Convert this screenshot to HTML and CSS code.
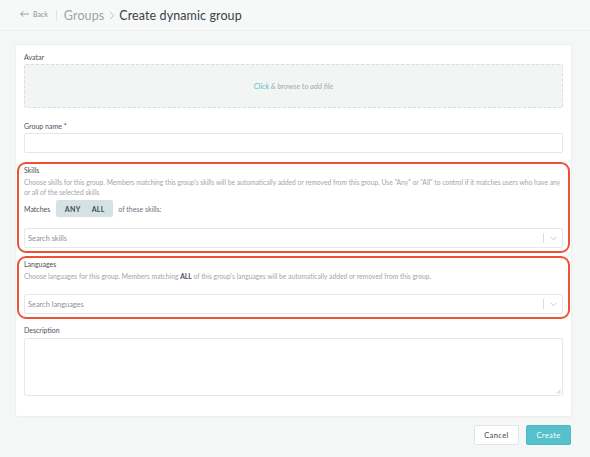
FILE: index.html
```html
<!DOCTYPE html>
<html>
<head>
<meta charset="utf-8">
<link rel="stylesheet" href="styles.css">
</head>
<body>
<header class="topbar">
  <a class="back">
    <svg class="back-arrow" width="9" height="6" viewBox="0 0 9 6"><path d="M8.5 3H1M3 0.7L0.8 3L3 5.3" fill="none" stroke="#8a919b" stroke-width="0.9" stroke-linecap="round" stroke-linejoin="round"/></svg>
    <span>Back</span>
  </a>
  <span class="sep"></span>
  <span class="crumb">Groups</span>
  <svg class="crumb-chev" width="6" height="9" viewBox="0 0 6 9"><path d="M1.2 1L4.6 4.5L1.2 8" fill="none" stroke="#b3b8be" stroke-width="0.9" stroke-linecap="round" stroke-linejoin="round"/></svg>
  <h1 class="title">Create dynamic group</h1>
</header>

<main class="main">
  <section class="card">
    <div class="field">
      <label class="label">Avatar</label>
      <div class="dropzone"><span class="click">Click</span>&nbsp;&amp; browse to add file</div>
    </div>

    <div class="field field-name">
      <label class="label">Group name *</label>
      <div class="input"></div>
    </div>

    <div class="highlight skills">
      <label class="label">Skills</label>
      <p class="help">Choose skills for this group. Members matching this group's skills will be automatically added or removed from this group. Use "Any" or "All" to control if it matches users who have any or all of the selected skills</p>
      <div class="matches">
        <span class="matches-text">Matches</span>
        <div class="toggle"><span>ANY</span><span>ALL</span></div>
        <span class="matches-tail">of these skills:</span>
      </div>
      <div class="select select-skills">
        <span class="placeholder">Search skills</span>
        <span class="select-ind">
          <span class="vbar"></span>
          <svg width="7" height="5" viewBox="0 0 7 5"><path d="M0.8 1L3.5 3.8L6.2 1" fill="none" stroke="#b8bdc2" stroke-width="0.8" stroke-linecap="round" stroke-linejoin="round"/></svg>
        </span>
      </div>
    </div>

    <div class="highlight languages">
      <label class="label">Languages</label>
      <p class="help">Choose languages for this group. Members matching <b>ALL</b> of this group's languages will be automatically added or removed from this group.</p>
      <div class="select select-lang">
        <span class="placeholder">Search languages</span>
        <span class="select-ind">
          <span class="vbar"></span>
          <svg width="7" height="5" viewBox="0 0 7 5"><path d="M0.8 1L3.5 3.8L6.2 1" fill="none" stroke="#b8bdc2" stroke-width="0.8" stroke-linecap="round" stroke-linejoin="round"/></svg>
        </span>
      </div>
    </div>

    <div class="field field-desc">
      <label class="label">Description</label>
      <div class="textarea">
        <svg class="grip" width="5" height="5" viewBox="0 0 5 5"><path d="M4.5 0.8L0.8 4.5M4.5 2.8L2.8 4.5" stroke="#9aa0a6" stroke-width="0.6"/></svg>
      </div>
    </div>
  </section>

  <div class="actions">
    <button class="btn btn-cancel">Cancel</button>
    <button class="btn btn-create">Create</button>
  </div>
</main>
</body>
</html>
```

FILE: styles.css
```css
* { box-sizing: border-box; }
html, body { margin: 0; padding: 0; }
body {
  background: #f5f6f6;
  font-family: Lato, "Open Sans", sans-serif;
  color: #3a3f4b;
  width: 590px;
  height: 457px;
  overflow: hidden;
}

.topbar {
  height: 31px;
  display: flex;
  align-items: center;
  padding-left: 20px;
  border-bottom: 1px solid #eef0f0;
  background: #f7f8f8;
}
.back {
  display: flex;
  align-items: center;
  gap: 4px;
  color: #8a919b;
  font-size: 7px;
  margin-top: -2px;
}
.sep {
  width: 1px;
  height: 11px;
  background: #e1e4e6;
  margin: 0 7px 0 8px;
}
.crumb {
  font-size: 12.5px;
  color: #9ea4ab;
  letter-spacing: 0.1px;
}
.crumb-chev { margin: 0 4px 0 5px; }
.title {
  margin: 0;
  font-size: 12.5px;
  font-weight: 400;
  color: #3a3f4b;
  letter-spacing: 0.1px;
}

.main {
  padding: 14px 19px 0 16px;
}
.card {
  background: #fff;
  border-radius: 2px;
  box-shadow: 0 0 0 1px #eceeef, 0 1px 2px rgba(0,0,0,0.04);
  padding: 7px 8px 20px 8px;
}
.field { display: flex; flex-direction: column; }
.label {
  font-size: 7px;
  line-height: 10px;
  color: #4a505b;
  margin-bottom: 2px;
  display: block;
}
.dropzone {
  height: 44px;
  background: #f3f5f5;
  border: 1px dashed #d3dfe0;
  border-radius: 2px;
  display: flex;
  align-items: center;
  justify-content: center;
  font-size: 7.6px;
  font-style: italic;
  color: #a4aab0;
}
.click { color: #4fc1cc; }
.field-name { margin-top: 13px; }
.input {
  height: 20px;
  border: 1px solid #e5e8ea;
  border-radius: 2px;
  background: #fff;
}

.highlight {
  border: 2px solid #ee5236;
  border-radius: 9px;
  margin: 0 -7px;
  padding: 1px 5px 3px 5px;
}
.skills { margin-top: 9px; }
.languages { margin-top: 3px; }
.help {
  margin: 0;
  font-size: 6.72px;
  line-height: 10px;
  color: #a0a6ad;
}
.help b { color: #4a505b; font-weight: 700; }
.matches {
  display: flex;
  align-items: center;
  margin-top: 3px;
}
.matches-text {
  font-size: 7px;
  font-weight: 400;
  color: #4a505b;
}
.matches-tail {
  font-size: 7px;
  font-weight: 400;
  color: #6e747d;
}
.toggle {
  display: flex;
  align-items: center;
  justify-content: space-around;
  width: 57px;
  height: 17px;
  background: #d4e2e3;
  border-radius: 2px;
  margin: 0 5px 0 6px;
  font-size: 7px;
  font-weight: 700;
  color: #3e4a56;
  padding: 0 3px;
  letter-spacing: 0.3px;
}
.select {
  height: 20px;
  border: 1px solid #e5e8ea;
  border-radius: 2px;
  display: flex;
  align-items: center;
  justify-content: space-between;
  padding: 0 5px 0 3px;
}
.select-skills { margin-top: 11px; }
.select-lang { margin-top: 13px; }
.placeholder {
  font-size: 7.4px;
  color: #8b9199;
}
.select-ind {
  display: flex;
  align-items: center;
  gap: 6px;
}
.vbar {
  width: 1px;
  height: 10px;
  background: #dadde0;
}

.field-desc { margin-top: 6px; }
.field-desc .label { margin-bottom: 3px; }
.textarea {
  height: 58px;
  border: 1px solid #e5e8ea;
  border-radius: 2px;
  position: relative;
}
.grip { position: absolute; right: 1px; bottom: 1px; }

.actions {
  display: flex;
  justify-content: flex-end;
  gap: 7px;
  margin-top: 9px;
}
.btn {
  width: 45px;
  height: 20px;
  border-radius: 2px;
  font-family: Lato, "Open Sans", sans-serif;
  font-size: 7.5px;
  font-weight: 400;
  letter-spacing: 0.4px;
  padding: 0;
  cursor: pointer;
}
.btn-cancel {
  background: #fff;
  border: 1px solid #e2e5e7;
  color: #3e4450;
}
.btn-create {
  background: #55c1cc;
  border: 1px solid #4fb9c4;
  color: #fff;
}
```
